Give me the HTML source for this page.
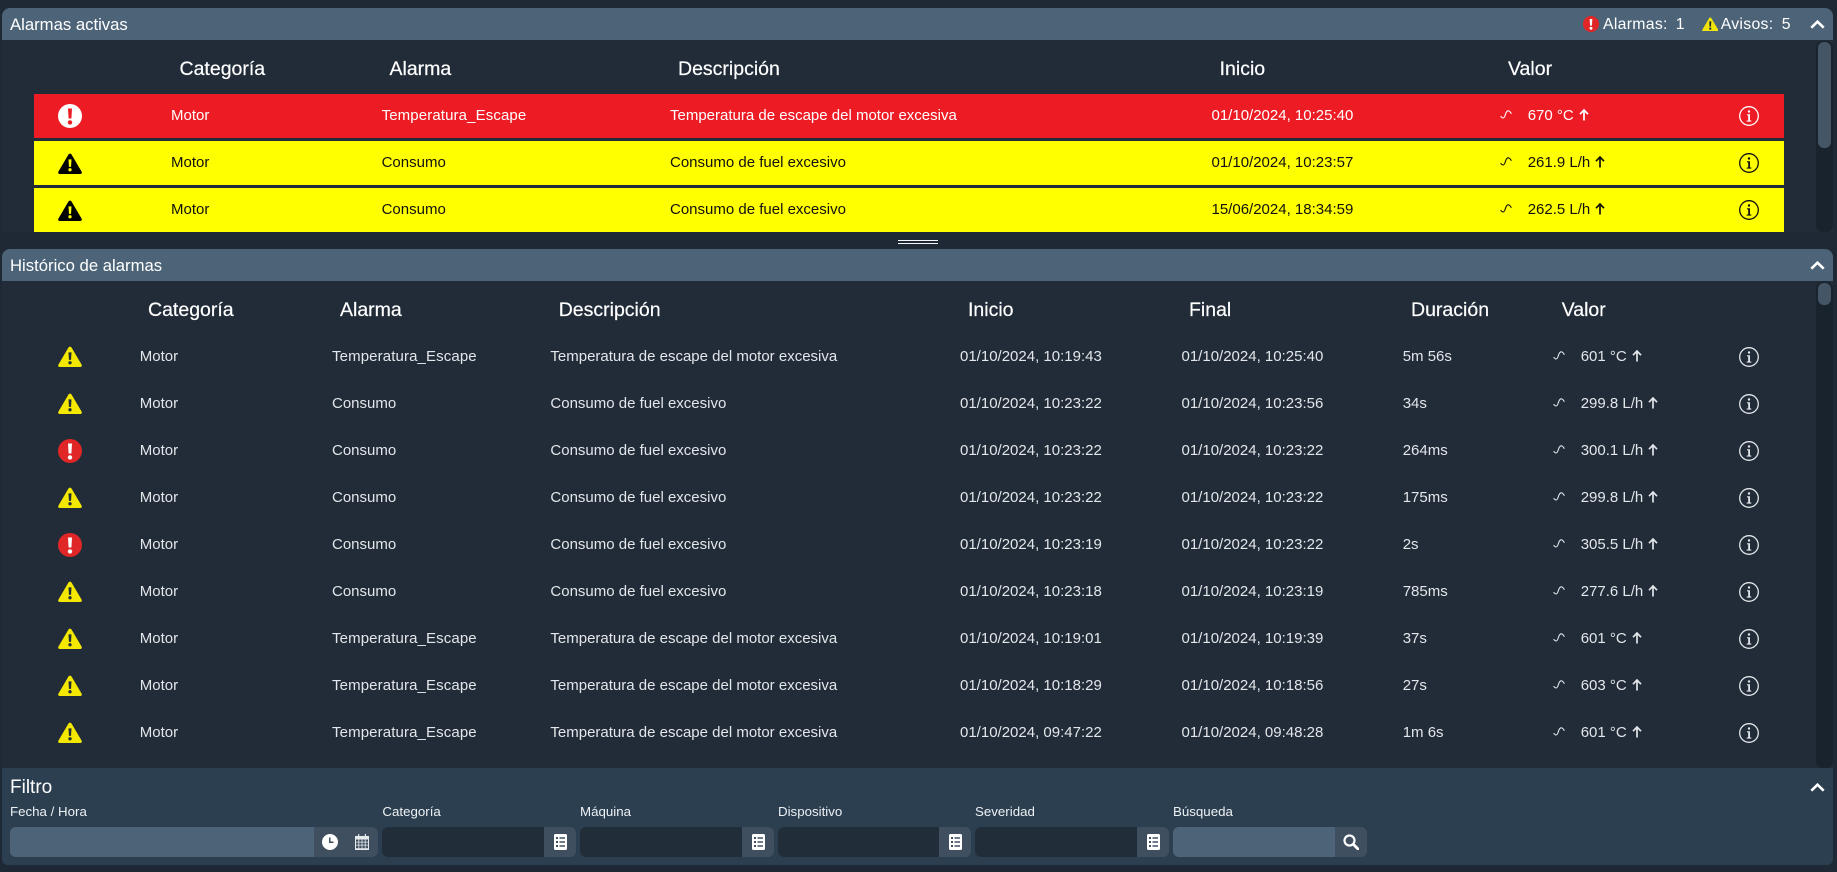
<!DOCTYPE html>
<html lang="es"><head><meta charset="utf-8"><title>Alarmas</title>
<style>
*{box-sizing:border-box}
html,body{margin:0;padding:0;width:1837px;height:872px;overflow:hidden;background:#1e2935;font-family:"Liberation Sans",sans-serif;color:#fff}
.a{position:absolute}
.hd{position:absolute;left:2px;width:1831px;height:32px;background:#4d6478;border-radius:8px 8px 0 0}
.body{position:absolute;left:2px;width:1831px;background:#212c38}
.t{position:absolute;font-size:16.7px;line-height:20px;white-space:nowrap;color:#fff}
.th{position:absolute;font-size:19.5px;line-height:24px;white-space:nowrap;color:#fff;-webkit-text-stroke:.2px #fff}
.track{position:absolute;left:1816px;width:16.7px;background:#19232d;border-radius:7px}
.thumb{position:absolute;left:1818px;width:13px;background:#445566;border-radius:6px}
.r{position:absolute;left:0;width:1837px;height:44px;line-height:43px;font-size:15px;white-space:nowrap}
.r span{position:absolute;top:0}
.r svg{position:absolute}
.e{background:#ed1c24;color:#fff}
.w{background:#ff0;color:#111}
.h{color:#e3e6ea}
.r span svg.ar{position:static;display:inline-block;vertical-align:-1px;margin-left:5px}
.lb{position:absolute;top:803px;font-size:13.3px;line-height:18px;color:#eef1f3;white-space:nowrap}
.inp{position:absolute;top:827px;height:30px;border-radius:6px;overflow:hidden;background:#3f4f60}
.inp i{position:absolute;left:0;top:0;bottom:0;background:#212d39}
.inp.l i{background:#4d6377}
</style></head><body>
<svg width="0" height="0" style="position:absolute">
<defs>
<symbol id="tri" viewBox="0 0 24 21"><path d="M12 .6c.7 0 1.2.4 1.6 1l10 17c.7 1.2-.1 2.4-1.4 2.4H1.8C.5 21-.3 19.800.4 18.600l10-17c.4-.6.9-1 1.600-1z" fill="currentColor"/></symbol>
<symbol id="ex" viewBox="0 0 24 24"><path d="M10 4.500h4l-.6 10h-2.800zM12 16.200a2.200 2.200 0 1 1 0 4.400 2.200 2.200 0 0 1 0-4.400z" fill="currentColor"/></symbol>
<symbol id="sn" viewBox="0 0 12 9"><path d="M.6 6.200c.8 1 1.700 1.800 2.500 1.800 1.500 0 1.900-2.600 2.700-4.600C6.500 1.600 7.300.8 8.300.8c1.400 0 2.300 1.500 3.100 3" fill="none" stroke="currentColor" stroke-width="1.100"/></symbol>
<symbol id="inf" viewBox="0 0 20 20"><circle cx="10" cy="10" r="9.300" fill="none" stroke="currentColor" stroke-width="1.300"/><circle cx="10" cy="5.500" r="1.200" fill="currentColor"/><path d="M8 8.300h3v6.200h1.300v1.100H7.700v-1.100H9.200V9.400H8z" fill="currentColor"/></symbol>
<symbol id="up" viewBox="0 0 10 12"><path d="M5 11.500V1.500M1 5.200 5 1l4 4.200" fill="none" stroke="currentColor" stroke-width="1.700"/></symbol>
<symbol id="ch" viewBox="0 0 15 9"><path d="M1.300 7.700 7.500 1.700l6.200 6" fill="none" stroke="#fff" stroke-width="2.600"/></symbol>
<symbol id="lst" viewBox="0 0 13 16"><path fill-rule="evenodd" d="M1.500 0h10A1.500 1.500 0 0 1 13 1.500v13a1.500 1.500 0 0 1-1.500 1.500h-10A1.500 1.500 0 0 1 0 14.500v-13A1.500 1.500 0 0 1 1.500 0zM2 3v2h2V3zM5.500 3.300v1.400H11V3.300zM2 7v2h2V7zM5.500 7.300v1.400H11V7.300zM2 11v2h2v-2zM5.500 11.300v1.400H11v-1.400z" fill="#fff"/></symbol>
</defs></svg>

<!-- Alarmas activas -->
<div class="hd" style="top:8px"></div>
<div class="body" style="top:40px;height:192px"></div>
<div class="t" style="left:10px;top:14.500px">Alarmas activas</div>
<svg class="a" style="left:1582.700px;top:16px;color:#e02626" width="16" height="16" viewBox="0 0 24 24"><circle cx="12" cy="12" r="12" fill="currentColor"/><use href="#ex" width="24" height="24" style="color:#fff"/></svg>
<div class="t" style="left:1603px;top:14.500px;font-size:15.800px;letter-spacing:.3px">Alarmas:</div>
<div class="t" style="left:1675.700px;top:14.500px;font-size:15.800px">1</div>
<svg class="a" style="left:1701.500px;top:16.500px;color:#f0e40a" width="16.500" height="14.500" viewBox="0 0 24 21"><use href="#tri" width="24" height="21"/><svg x="3" y="3" width="18" height="18" viewBox="0 0 24 24" style="color:#1d2733"><use href="#ex" width="24" height="24"/></svg></svg>
<div class="t" style="left:1720.700px;top:14.500px;font-size:15.800px;letter-spacing:.3px">Avisos:</div>
<div class="t" style="left:1781.700px;top:14.500px;font-size:15.800px">5</div>
<svg class="a" style="left:1810px;top:20px" width="15" height="9"><use href="#ch" width="15" height="9"/></svg>

<div class="th" style="left:179.500px;top:57px">Categoría</div>
<div class="th" style="left:389.500px;top:57px">Alarma</div>
<div class="th" style="left:678px;top:57px">Descripción</div>
<div class="th" style="left:1219.600px;top:57px">Inicio</div>
<div class="th" style="left:1508px;top:57px">Valor</div>

<div class="a e" style="left:34px;top:94px;width:1750px;height:44px"></div>
<div class="a w" style="left:34px;top:141px;width:1750px;height:44px"></div>
<div class="a w" style="left:34px;top:188px;width:1750px;height:44px"></div>

<div class="r" style="top:94px;color:#fff">
<svg style="left:58px;top:10px;color:#fff" width="24" height="24" viewBox="0 0 24 24"><circle cx="12" cy="12" r="12" fill="currentColor"/><use href="#ex" width="24" height="24" style="color:#ed1c24"/></svg>
<span style="left:171px">Motor</span><span style="left:381.600px;letter-spacing:.12px">Temperatura_Escape</span><span style="left:670px">Temperatura de escape del motor excesiva</span><span style="left:1211.500px">01/10/2024, 10:25:40</span>
<svg style="left:1500px;top:16px" width="12" height="9"><use href="#sn" width="12" height="9"/></svg>
<span style="left:1527.700px">670 °C<svg class="ar" width="10" height="12"><use href="#up" width="10" height="12"/></svg></span>
<svg style="left:1739px;top:12px" width="20" height="20"><use href="#inf" width="20" height="20"/></svg></div>

<div class="r" style="top:141px;color:#111">
<svg style="left:58px;top:12px;color:#000" width="24" height="21"><use href="#tri" width="24" height="21"/><svg x="3" y="3" width="18" height="18" viewBox="0 0 24 24" style="color:#ff0"><use href="#ex" width="24" height="24"/></svg></svg>
<span style="left:171px">Motor</span><span style="left:381.600px">Consumo</span><span style="left:670px">Consumo de fuel excesivo</span><span style="left:1211.500px">01/10/2024, 10:23:57</span>
<svg style="left:1500px;top:16px" width="12" height="9"><use href="#sn" width="12" height="9"/></svg>
<span style="left:1527.700px">261.9 L/h<svg class="ar" width="10" height="12"><use href="#up" width="10" height="12"/></svg></span>
<svg style="left:1739px;top:12px" width="20" height="20"><use href="#inf" width="20" height="20"/></svg></div>

<div class="r" style="top:188px;color:#111">
<svg style="left:58px;top:12px;color:#000" width="24" height="21"><use href="#tri" width="24" height="21"/><svg x="3" y="3" width="18" height="18" viewBox="0 0 24 24" style="color:#ff0"><use href="#ex" width="24" height="24"/></svg></svg>
<span style="left:171px">Motor</span><span style="left:381.600px">Consumo</span><span style="left:670px">Consumo de fuel excesivo</span><span style="left:1211.500px">15/06/2024, 18:34:59</span>
<svg style="left:1500px;top:16px" width="12" height="9"><use href="#sn" width="12" height="9"/></svg>
<span style="left:1527.700px">262.5 L/h<svg class="ar" width="10" height="12"><use href="#up" width="10" height="12"/></svg></span>
<svg style="left:1739px;top:12px" width="20" height="20"><use href="#inf" width="20" height="20"/></svg></div>

<div class="track" style="top:41px;height:191px"></div>
<div class="thumb" style="top:42px;height:106px"></div>

<div class="a" style="left:898px;top:239.500px;width:39.500px;height:1.600px;background:#f4f6f8"></div>
<div class="a" style="left:898px;top:242.500px;width:39.500px;height:1.600px;background:#f4f6f8"></div>

<!-- Histórico -->
<div class="hd" style="top:249px"></div>
<div class="body" style="top:281px;height:487px"></div>
<div class="t" style="left:10px;top:255.500px">Histórico de alarmas</div>
<svg class="a" style="left:1810px;top:261px" width="15" height="9"><use href="#ch" width="15" height="9"/></svg>

<div class="th" style="left:148px;top:298px">Categoría</div>
<div class="th" style="left:340px;top:298px">Alarma</div>
<div class="th" style="left:558.700px;top:298px">Descripción</div>
<div class="th" style="left:968px;top:298px">Inicio</div>
<div class="th" style="left:1189px;top:298px">Final</div>
<div class="th" style="left:1411px;top:298px">Duración</div>
<div class="th" style="left:1561.700px;top:298px">Valor</div>

<div class="r h" style="top:335px"><svg style="left:58px;top:11px;color:#f5e800" width="24" height="21"><use href="#tri" width="24" height="21"/><svg x="3" y="3" width="18" height="18" viewBox="0 0 24 24" style="color:#212c38"><use href="#ex" width="24" height="24"/></svg></svg><span style="left:139.800px">Motor</span><span style="left:332px;letter-spacing:.12px">Temperatura_Escape</span><span style="left:550.400px">Temperatura de escape del motor excesiva</span><span style="left:960px">01/10/2024, 10:19:43</span><span style="left:1181.500px">01/10/2024, 10:25:40</span><span style="left:1402.700px">5m 56s</span><svg style="left:1553px;top:16px" width="12" height="9"><use href="#sn" width="12" height="9"/></svg><span style="left:1580.700px">601 °C<svg class="ar" width="10" height="12"><use href="#up" width="10" height="12"/></svg></span><svg style="left:1739px;top:12px" width="20" height="20"><use href="#inf" width="20" height="20"/></svg></div>

<div class="r h" style="top:382px"><svg style="left:58px;top:11px;color:#f5e800" width="24" height="21"><use href="#tri" width="24" height="21"/><svg x="3" y="3" width="18" height="18" viewBox="0 0 24 24" style="color:#212c38"><use href="#ex" width="24" height="24"/></svg></svg><span style="left:139.800px">Motor</span><span style="left:332px">Consumo</span><span style="left:550.400px">Consumo de fuel excesivo</span><span style="left:960px">01/10/2024, 10:23:22</span><span style="left:1181.500px">01/10/2024, 10:23:56</span><span style="left:1402.700px">34s</span><svg style="left:1553px;top:16px" width="12" height="9"><use href="#sn" width="12" height="9"/></svg><span style="left:1580.700px">299.8 L/h<svg class="ar" width="10" height="12"><use href="#up" width="10" height="12"/></svg></span><svg style="left:1739px;top:12px" width="20" height="20"><use href="#inf" width="20" height="20"/></svg></div>

<div class="r h" style="top:429px"><svg style="left:58px;top:10px;color:#e02626" width="24" height="24" viewBox="0 0 24 24"><circle cx="12" cy="12" r="12" fill="currentColor"/><use href="#ex" width="24" height="24" style="color:#fff"/></svg><span style="left:139.800px">Motor</span><span style="left:332px">Consumo</span><span style="left:550.400px">Consumo de fuel excesivo</span><span style="left:960px">01/10/2024, 10:23:22</span><span style="left:1181.500px">01/10/2024, 10:23:22</span><span style="left:1402.700px">264ms</span><svg style="left:1553px;top:16px" width="12" height="9"><use href="#sn" width="12" height="9"/></svg><span style="left:1580.700px">300.1 L/h<svg class="ar" width="10" height="12"><use href="#up" width="10" height="12"/></svg></span><svg style="left:1739px;top:12px" width="20" height="20"><use href="#inf" width="20" height="20"/></svg></div>

<div class="r h" style="top:476px"><svg style="left:58px;top:11px;color:#f5e800" width="24" height="21"><use href="#tri" width="24" height="21"/><svg x="3" y="3" width="18" height="18" viewBox="0 0 24 24" style="color:#212c38"><use href="#ex" width="24" height="24"/></svg></svg><span style="left:139.800px">Motor</span><span style="left:332px">Consumo</span><span style="left:550.400px">Consumo de fuel excesivo</span><span style="left:960px">01/10/2024, 10:23:22</span><span style="left:1181.500px">01/10/2024, 10:23:22</span><span style="left:1402.700px">175ms</span><svg style="left:1553px;top:16px" width="12" height="9"><use href="#sn" width="12" height="9"/></svg><span style="left:1580.700px">299.8 L/h<svg class="ar" width="10" height="12"><use href="#up" width="10" height="12"/></svg></span><svg style="left:1739px;top:12px" width="20" height="20"><use href="#inf" width="20" height="20"/></svg></div>

<div class="r h" style="top:523px"><svg style="left:58px;top:10px;color:#e02626" width="24" height="24" viewBox="0 0 24 24"><circle cx="12" cy="12" r="12" fill="currentColor"/><use href="#ex" width="24" height="24" style="color:#fff"/></svg><span style="left:139.800px">Motor</span><span style="left:332px">Consumo</span><span style="left:550.400px">Consumo de fuel excesivo</span><span style="left:960px">01/10/2024, 10:23:19</span><span style="left:1181.500px">01/10/2024, 10:23:22</span><span style="left:1402.700px">2s</span><svg style="left:1553px;top:16px" width="12" height="9"><use href="#sn" width="12" height="9"/></svg><span style="left:1580.700px">305.5 L/h<svg class="ar" width="10" height="12"><use href="#up" width="10" height="12"/></svg></span><svg style="left:1739px;top:12px" width="20" height="20"><use href="#inf" width="20" height="20"/></svg></div>

<div class="r h" style="top:570px"><svg style="left:58px;top:11px;color:#f5e800" width="24" height="21"><use href="#tri" width="24" height="21"/><svg x="3" y="3" width="18" height="18" viewBox="0 0 24 24" style="color:#212c38"><use href="#ex" width="24" height="24"/></svg></svg><span style="left:139.800px">Motor</span><span style="left:332px">Consumo</span><span style="left:550.400px">Consumo de fuel excesivo</span><span style="left:960px">01/10/2024, 10:23:18</span><span style="left:1181.500px">01/10/2024, 10:23:19</span><span style="left:1402.700px">785ms</span><svg style="left:1553px;top:16px" width="12" height="9"><use href="#sn" width="12" height="9"/></svg><span style="left:1580.700px">277.6 L/h<svg class="ar" width="10" height="12"><use href="#up" width="10" height="12"/></svg></span><svg style="left:1739px;top:12px" width="20" height="20"><use href="#inf" width="20" height="20"/></svg></div>

<div class="r h" style="top:617px"><svg style="left:58px;top:11px;color:#f5e800" width="24" height="21"><use href="#tri" width="24" height="21"/><svg x="3" y="3" width="18" height="18" viewBox="0 0 24 24" style="color:#212c38"><use href="#ex" width="24" height="24"/></svg></svg><span style="left:139.800px">Motor</span><span style="left:332px;letter-spacing:.12px">Temperatura_Escape</span><span style="left:550.400px">Temperatura de escape del motor excesiva</span><span style="left:960px">01/10/2024, 10:19:01</span><span style="left:1181.500px">01/10/2024, 10:19:39</span><span style="left:1402.700px">37s</span><svg style="left:1553px;top:16px" width="12" height="9"><use href="#sn" width="12" height="9"/></svg><span style="left:1580.700px">601 °C<svg class="ar" width="10" height="12"><use href="#up" width="10" height="12"/></svg></span><svg style="left:1739px;top:12px" width="20" height="20"><use href="#inf" width="20" height="20"/></svg></div>

<div class="r h" style="top:664px"><svg style="left:58px;top:11px;color:#f5e800" width="24" height="21"><use href="#tri" width="24" height="21"/><svg x="3" y="3" width="18" height="18" viewBox="0 0 24 24" style="color:#212c38"><use href="#ex" width="24" height="24"/></svg></svg><span style="left:139.800px">Motor</span><span style="left:332px;letter-spacing:.12px">Temperatura_Escape</span><span style="left:550.400px">Temperatura de escape del motor excesiva</span><span style="left:960px">01/10/2024, 10:18:29</span><span style="left:1181.500px">01/10/2024, 10:18:56</span><span style="left:1402.700px">27s</span><svg style="left:1553px;top:16px" width="12" height="9"><use href="#sn" width="12" height="9"/></svg><span style="left:1580.700px">603 °C<svg class="ar" width="10" height="12"><use href="#up" width="10" height="12"/></svg></span><svg style="left:1739px;top:12px" width="20" height="20"><use href="#inf" width="20" height="20"/></svg></div>

<div class="r h" style="top:711px"><svg style="left:58px;top:11px;color:#f5e800" width="24" height="21"><use href="#tri" width="24" height="21"/><svg x="3" y="3" width="18" height="18" viewBox="0 0 24 24" style="color:#212c38"><use href="#ex" width="24" height="24"/></svg></svg><span style="left:139.800px">Motor</span><span style="left:332px;letter-spacing:.12px">Temperatura_Escape</span><span style="left:550.400px">Temperatura de escape del motor excesiva</span><span style="left:960px">01/10/2024, 09:47:22</span><span style="left:1181.500px">01/10/2024, 09:48:28</span><span style="left:1402.700px">1m 6s</span><svg style="left:1553px;top:16px" width="12" height="9"><use href="#sn" width="12" height="9"/></svg><span style="left:1580.700px">601 °C<svg class="ar" width="10" height="12"><use href="#up" width="10" height="12"/></svg></span><svg style="left:1739px;top:12px" width="20" height="20"><use href="#inf" width="20" height="20"/></svg></div>

<div class="track" style="top:282px;height:486px"></div>
<div class="thumb" style="top:283px;height:22px"></div>

<!-- Filtro -->
<div class="a" style="left:2px;top:768px;width:1831px;height:97px;background:#2b3f51;border-radius:0 0 6px 6px"></div>
<div class="t" style="left:10px;top:776px;font-size:19px;line-height:24px">Filtro</div>
<svg class="a" style="left:1810px;top:783px" width="15" height="9"><use href="#ch" width="15" height="9"/></svg>

<div class="lb" style="left:10px">Fecha / Hora</div>
<div class="lb" style="left:382.400px">Categoría</div>
<div class="lb" style="left:580px">Máquina</div>
<div class="lb" style="left:778px">Dispositivo</div>
<div class="lb" style="left:975px">Severidad</div>
<div class="lb" style="left:1173px">Búsqueda</div>

<div class="inp l" style="left:10px;width:367.600px"><i style="width:304.400px"></i></div>
<svg class="a" style="left:322px;top:834px" width="16" height="16" viewBox="0 0 16 16"><path fill-rule="evenodd" d="M8 0a8 8 0 1 1 0 16A8 8 0 0 1 8 0zM7 3.500V9h4.500V7.500H8.500v-4z" fill="#fff"/></svg>
<svg class="a" style="left:355px;top:834px" width="14" height="16" viewBox="0 0 14 16"><path fill-rule="evenodd" d="M3 0h1.200v2H9.800V0H11v2h3v14H0V2h3zM1 5.500v2.200h2.400V5.500zM4.200 5.500v2.200h2.400V5.500zM7.400 5.500v2.200h2.400V5.500zM10.600 5.500v2.200H13V5.500zM1 8.500v2.200h2.400V8.500zM4.200 8.500v2.200h2.400V8.500zM7.400 8.500v2.200h2.400V8.500zM10.600 8.500v2.200H13V8.500zM1 11.500v2.800h2.400v-2.800zM4.200 11.500v2.800h2.400v-2.800zM7.400 11.500v2.800h2.400v-2.800zM10.600 11.500v2.800H13v-2.800z" fill="#e6e9ec"/></svg>

<div class="inp" style="left:382.400px;width:193.600px"><i style="width:161.600px"></i></div>
<svg class="a" style="left:553.500px;top:834px" width="13" height="16"><use href="#lst" width="13" height="16"/></svg>
<div class="inp" style="left:580px;width:194px"><i style="width:162px"></i></div>
<svg class="a" style="left:751.500px;top:834px" width="13" height="16"><use href="#lst" width="13" height="16"/></svg>
<div class="inp" style="left:778px;width:193px"><i style="width:161px"></i></div>
<svg class="a" style="left:948.500px;top:834px" width="13" height="16"><use href="#lst" width="13" height="16"/></svg>
<div class="inp" style="left:975px;width:194px"><i style="width:162px"></i></div>
<svg class="a" style="left:1146.500px;top:834px" width="13" height="16"><use href="#lst" width="13" height="16"/></svg>
<div class="inp l" style="left:1173px;width:194px"><i style="width:162px"></i></div>
<svg class="a" style="left:1343px;top:834px" width="16" height="16" viewBox="0 0 16 16"><circle cx="6.500" cy="6.500" r="5" fill="none" stroke="#fff" stroke-width="2.200"/><path d="M10.300 10.300 15 15" stroke="#fff" stroke-width="2.800" stroke-linecap="round"/></svg>
</body></html>
